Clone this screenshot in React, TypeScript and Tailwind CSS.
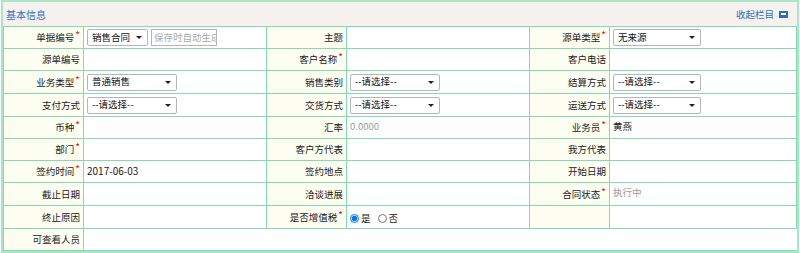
import React from 'react';

type Cell = { label: string; req?: boolean; value?: React.ReactNode };

function Req() {
  return <span className="text-[#ff0000] text-[10px] leading-none relative -top-[2px] ml-px">*</span>;
}

function Select({ text, w }: { text: string; w: string }) {
  return (
    <div className={`${w} h-[17px] border border-[#b5b5b5] rounded-[2px] bg-white flex items-center justify-between pl-[4px] pr-[5px]`}>
      <span className="text-[9.5px] text-[#111] leading-none">{text}</span>
      <span className="w-0 h-0 border-l-[3px] border-r-[3px] border-t-[3px] border-l-transparent border-r-transparent border-t-[#222]" />
    </div>
  );
}

function Muted({ text }: { text: string }) {
  return <span className="text-[#999] self-start mt-[1px]">{text}</span>;
}

const rows: Cell[][] = [
  [
    {
      label: '单据编号',
      req: true,
      value: (
        <div className="flex items-center gap-[3px]">
          <Select text="销售合同" w="w-[61px]" />
          <div className="w-[66px] h-[17px] border border-[#b5b5b5] bg-white overflow-hidden whitespace-nowrap pl-[2px] text-[9.5px] text-[#aaa] leading-[15px]">
            保存时自动生成
          </div>
        </div>
      ),
    },
    { label: '主题' },
    { label: '源单类型', req: true, value: <Select text="无来源" w="w-[88px]" /> },
  ],
  [{ label: '源单编号' }, { label: '客户名称', req: true }, { label: '客户电话' }],
  [
    { label: '业务类型', req: true, value: <Select text="普通销售" w="w-[90px]" /> },
    { label: '销售类别', value: <Select text="--请选择--" w="w-[90px]" /> },
    { label: '结算方式', value: <Select text="--请选择--" w="w-[88px]" /> },
  ],
  [
    { label: '支付方式', value: <Select text="--请选择--" w="w-[90px]" /> },
    { label: '交货方式', value: <Select text="--请选择--" w="w-[90px]" /> },
    { label: '运送方式', value: <Select text="--请选择--" w="w-[88px]" /> },
  ],
  [
    { label: '币种', req: true },
    { label: '汇率', value: <Muted text="0.0000" /> },
    { label: '业务员', req: true, value: <span className="self-start mt-[1px]">黄燕</span> },
  ],
  [{ label: '部门', req: true }, { label: '客户方代表' }, { label: '我方代表' }],
  [
    { label: '签约时间', req: true, value: <span className="self-start mt-[1px] text-[10px]">2017-06-03</span> },
    { label: '签约地点' },
    { label: '开始日期' },
  ],
  [{ label: '截止日期' }, { label: '洽谈进展' }, { label: '合同状态', req: true, value: <Muted text="执行中" /> }],
  [
    { label: '终止原因' },
    {
      label: '是否增值税',
      req: true,
      value: (
        <div className="flex items-center mt-[2px]">
          <input type="radio" name="vat" defaultChecked className="w-[9px] h-[9px] m-0 mr-[2px]" />
          <span className="mr-[7px]">是</span>
          <input type="radio" name="vat" className="w-[9px] h-[9px] m-0 mr-[2px]" />
          <span>否</span>
        </div>
      ),
    },
    { label: '' },
  ],
];

const tall = [2, 3, 7, 8];

export default function App() {
  return (
    <div className="w-[800px] h-[253px] bg-white" style={{ fontFamily: '"Noto Sans CJK SC", "Liberation Sans", sans-serif' }}>
      <div className="ml-px w-[798px] border-2 border-[#a9e6c6] text-[9.5px] text-[#1a1a1a]">
        <div className="h-[24px] bg-[#f4f1ef] flex items-center justify-between pl-[3px] pr-[9px]">
          <span className="text-[#2f6fbf] text-[10px]">基本信息</span>
          <div className="flex items-center gap-[5px] text-[#2f6fbf]">
            <span>收起栏目</span>
            <span className="w-[9px] h-[7px] bg-[#2c6cc4] flex items-center justify-center">
              <span className="w-[5px] h-[2px] bg-white" />
            </span>
          </div>
        </div>
        <table className="w-full border-collapse table-fixed">
          <colgroup>
            <col className="w-[80px]" />
            <col className="w-[183px]" />
            <col className="w-[80px]" />
            <col className="w-[183px]" />
            <col className="w-[80px]" />
            <col />
          </colgroup>
          <tbody>
            {rows.map((row, i) => {
              const h = tall.includes(i) ? 'h-[23px]' : 'h-[22px]';
              return (
                <tr key={i}>
                  {row.map((c, j) => (
                    <React.Fragment key={j}>
                      <td className={`border border-[#84dcae] bg-[#fdfdf1] text-right pr-[3px] p-0 align-middle whitespace-nowrap ${h}`}>
                        {c.label}
                        {c.req && <Req />}
                      </td>
                      <td className={`border border-[#84dcae] bg-white pl-[3px] p-0 align-middle ${h}`}>
                        <div className="flex items-center h-[20px]">{c.value}</div>
                      </td>
                    </React.Fragment>
                  ))}
                </tr>
              );
            })}
            <tr>
              <td className="border border-[#84dcae] bg-[#fdfdf1] text-right pr-[3px] p-0 align-middle whitespace-nowrap h-[22px]">
                可查看人员
              </td>
              <td className="border border-[#84dcae] border-r-0 bg-white h-[22px]" colSpan={5} />
            </tr>
          </tbody>
        </table>
      </div>
    </div>
  );
}
